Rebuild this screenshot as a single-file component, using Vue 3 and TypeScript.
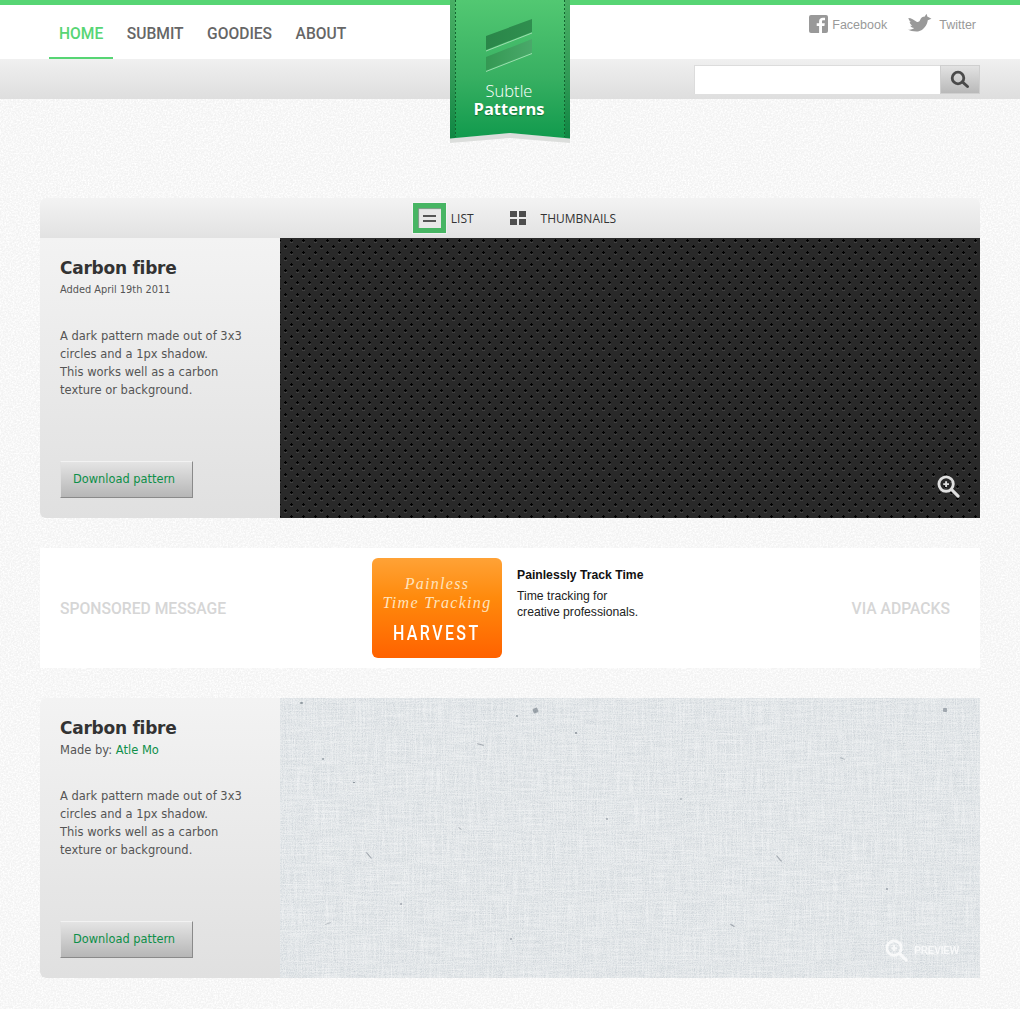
<script setup lang="ts">
interface TPanel {
  id: string;
  kind: "carbon" | "linen";
  meta: string;
  author?: string;
}

interface TSpeck {
  x: number;
  y: number;
  w: number;
  h: number;
  r: number;
  o: number;
}

const navItems = ["Home", "Submit", "Goodies", "About"];

const panels: TPanel[] = [
  { id: "one", kind: "carbon", meta: "Added April 19th 2011" },
  { id: "two", kind: "linen", meta: "Made by: ", author: "Atle Mo" },
];

const specks: TSpeck[] = [
  { x: 20, y: 4, w: 3, h: 2, r: 0, o: 0.6 },
  { x: 253, y: 10, w: 5, h: 5, r: -20, o: 0.55 },
  { x: 295, y: 34, w: 2, h: 2, r: 0, o: 0.7 },
  { x: 236, y: 17, w: 2, h: 2, r: 0, o: 0.6 },
  { x: 197, y: 46, w: 7, h: 1, r: 15, o: 0.5 },
  { x: 42, y: 60, w: 2, h: 2, r: 0, o: 0.6 },
  { x: 73, y: 84, w: 2, h: 1, r: 0, o: 0.7 },
  { x: 663, y: 10, w: 4, h: 4, r: 0, o: 0.5 },
  { x: 85, y: 157, w: 8, h: 1, r: 50, o: 0.5 },
  { x: 495, y: 160, w: 8, h: 1, r: 50, o: 0.5 },
  { x: 606, y: 190, w: 2, h: 2, r: 0, o: 0.5 },
  { x: 450, y: 227, w: 5, h: 1, r: 30, o: 0.5 },
  { x: 45, y: 225, w: 6, h: 1, r: -20, o: 0.4 },
  { x: 326, y: 120, w: 2, h: 2, r: 0, o: 0.5 },
  { x: 120, y: 205, w: 2, h: 2, r: 0, o: 0.5 },
  { x: 560, y: 60, w: 5, h: 1, r: 20, o: 0.35 },
  { x: 400, y: 100, w: 2, h: 2, r: 0, o: 0.4 },
  { x: 230, y: 240, w: 2, h: 2, r: 0, o: 0.5 },
  { x: 178, y: 130, w: 4, h: 1, r: 40, o: 0.4 },
];

function speckStyle(s: TSpeck) {
  return {
    left: `${s.x}px`,
    top: `${s.y}px`,
    width: `${s.w}px`,
    height: `${s.h}px`,
    opacity: s.o,
    transform: `rotate(${s.r}deg)`,
  };
}
</script>

<template>
  <div class="page">
    <header class="site-header">
      <div class="header-top">
        <nav class="main-nav">
          <a
            v-for="(item, i) in navItems"
            :key="item"
            class="nav-link"
            :class="{ active: i === 0 }"
          >{{ item }}</a>
        </nav>
        <div class="social">
          <a class="social-link">
            <svg class="fb-icon" width="19" height="18" viewBox="0 0 19 18">
              <rect width="19" height="18" rx="2" fill="#999" />
              <path
                d="M13 18v-7h2.400l.4-2.800H13V6.600c0-.8.3-1.300 1.400-1.300H16V2.800c-.3 0-1.200-.1-2.200-.1-2.200 0-3.700 1.300-3.700 3.700v1.800H7.700V11h2.400v7z"
                fill="#fff"
              />
            </svg>
            Facebook
          </a>
          <a class="social-link tw">
            <svg class="tw-icon" width="25" height="18" viewBox="0 0 25 18.500">
              <path
                d="M1 4C4 4 7 6 9.500 8C11 8.500 12.500 8 13 6.500C14 3.500 16 2.500 18 2.500C18.500 1.500 19 .5 20 0L20.500 2.500L24.800 5L21 6.500C20.500 11 17 17 11 18C7 18.300 3 17.500 .2 16C3 16.500 5 16 7 14.500C5 14 3.500 13 3 12H5C3.500 11 2.500 9.500 2.300 8L4 8.500C2.500 7.500 1.500 6 1 4Z"
                fill="#999"
              />
            </svg>
            Twitter
          </a>
        </div>
      </div>
      <div class="header-band">
        <form class="search" @submit.prevent>
          <input class="search-input" type="text" />
          <button class="search-btn" type="button" aria-label="Search">
            <svg width="20" height="20" viewBox="0 0 20 20">
              <circle cx="8" cy="8" r="5.800" fill="none" stroke="#4a4a4a" stroke-width="2.800" />
              <path d="M12.500 12l5 4.500" stroke="#4a4a4a" stroke-width="3" stroke-linecap="round" />
            </svg>
          </button>
        </form>
      </div>
    </header>

    <a class="ribbon">
      <svg class="ribbon-shape" width="120" height="144" viewBox="0 0 120 144">
        <defs>
          <linearGradient id="ribbonFill" x1="0" y1="0" x2="0" y2="1">
            <stop offset="0" stop-color="#52c872" />
            <stop offset="0.55" stop-color="#38b062" />
            <stop offset="1" stop-color="#119a4d" />
          </linearGradient>
          <linearGradient id="stripeFill" x1="0" y1="0" x2="1" y2="0">
            <stop offset="0" stop-color="#2a8649" />
            <stop offset="1" stop-color="#2f8f4f" />
          </linearGradient>
          <linearGradient id="stripeFillTwo" x1="0" y1="0" x2="1" y2="0">
            <stop offset="0" stop-color="#349853" />
            <stop offset="1" stop-color="#4aa96a" />
          </linearGradient>
        </defs>
        <path d="M0 138L60 133L120 138V143L60 138L0 143Z" fill="#dcdedc" />
        <path d="M0 0H120V138.500L60 133L0 138.500Z" fill="url(#ribbonFill)" />
        <path d="M0 0H5V138L0 138.500Z" fill="#000" opacity="0.12" />
        <path d="M115 0H120V138.500L115 138Z" fill="#000" opacity="0.12" />
        <path d="M5.500 0V137M114.500 0V137" stroke="#14642f" stroke-width="1" stroke-dasharray="2 2" />
        <path d="M36 36L82 19V32L36 50Z" fill="url(#stripeFill)" />
        <path d="M36 51L82 33" stroke="#9ddcae" stroke-width="1" />
        <path d="M36 57L82 39V52.500L36 70.500Z" fill="url(#stripeFillTwo)" />
        <path d="M36 71.500L82 53.500" stroke="#9ddcae" stroke-width="1" />
      </svg>
      <span class="ribbon-text">
        <span class="ribbon-light">Subtle</span>
        <span class="ribbon-bold">Patterns</span>
      </span>
    </a>

    <main class="content">
      <div class="view-switch">
        <a class="view-option">
          <span class="list-icon"><i></i><i></i></span>
          List
        </a>
        <a class="view-option thumbs">
          <span class="thumb-icon"><i></i><i></i><i></i><i></i></span>
          Thumbnails
        </a>
      </div>

      <template v-for="(panel, index) in panels" :key="panel.id">
        <section class="pattern" :class="panel.kind">
          <div class="pattern-info">
            <h2 class="pattern-title">Carbon fibre</h2>
            <p class="pattern-meta" :class="{ large: panel.author }">
              {{ panel.meta }}<a v-if="panel.author" class="author">{{ panel.author }}</a>
            </p>
            <p class="pattern-desc">
              A dark pattern made out of 3x3<br />
              circles and a 1px shadow.<br />
              This works well as a carbon<br />
              texture or background.
            </p>
            <a class="download">Download pattern</a>
          </div>
          <div class="pattern-preview">
            <template v-if="panel.kind === 'linen'">
              <span
                v-for="(s, i) in specks"
                :key="i"
                class="speck"
                :style="speckStyle(s)"
              ></span>
            </template>
            <div class="zoom" :class="{ faded: panel.kind === 'linen' }">
              <svg width="23" height="23" viewBox="0 0 24 24">
                <circle cx="9.500" cy="9.500" r="7.500" fill="none" stroke="#fff" stroke-width="3" />
                <path d="M15 15l7 7" stroke="#fff" stroke-width="3.200" stroke-linecap="round" />
                <path d="M9.500 6.500v6M6.500 9.500h6" stroke="#fff" stroke-width="2" />
              </svg>
              <span v-if="panel.kind === 'linen'" class="zoom-label">Preview</span>
            </div>
          </div>
        </section>

        <aside v-if="index === 0" class="sponsor">
          <span class="sponsor-label">Sponsored message</span>
          <div class="harvest">
            <span class="harvest-line">Painless</span>
            <span class="harvest-line">Time Tracking</span>
            <span class="harvest-name">HARVEST</span>
          </div>
          <div class="sponsor-copy">
            <strong>Painlessly Track Time</strong>
            <span>Time tracking for<br />creative professionals.</span>
          </div>
          <span class="sponsor-label">Via Adpacks</span>
        </aside>
      </template>
    </main>
  </div>
</template>

<style>
html,
body {
  margin: 0;
  background-color: #f3f3f3;
  background-image: url("data:image/svg+xml,%3Csvg xmlns='http://www.w3.org/2000/svg' width='300' height='300'%3E%3Cfilter id='n'%3E%3CfeTurbulence type='fractalNoise' baseFrequency='0.6' numOctaves='3' stitchTiles='stitch'/%3E%3CfeColorMatrix values='0 0 0 0 1 0 0 0 0 1 0 0 0 0 1 2.4 0 0 0 -0.85'/%3E%3C/filter%3E%3Crect width='300' height='300' filter='url(%23n)'/%3E%3C/svg%3E");
}
</style>

<style scoped>
.page {
  position: relative;
  width: 1020px;
  height: 1009px;
  overflow: hidden;
  font-family: "DejaVu Sans", sans-serif;
}

.site-header {
  border-top: 5px solid #57d574;
}

.header-top {
  display: flex;
  justify-content: space-between;
  height: 54px;
  background: #fff;
}

.main-nav {
  display: flex;
  margin-left: 49px;
  gap: 3.5px;
}

.nav-link {
  box-sizing: border-box;
  height: 54px;
  padding: 19px 10px 0;
  font-family: Roboto, sans-serif;
  font-size: 15.6px;
  font-weight: 500;
  line-height: 20px;
  text-transform: uppercase;
  color: #666;
}

.nav-link.active {
  color: #57d574;
  border-bottom: 2px solid #57d574;
}

.social {
  display: flex;
  gap: 20px;
  padding: 9px 44px 0 0;
  font-family: "Liberation Sans", Arial, sans-serif;
  font-size: 12.5px;
  color: #999;
}

.social-link {
  display: flex;
  align-items: flex-start;
  line-height: 22px;
}

.fb-icon {
  margin: 1px 4px 0 1px;
}

.tw-icon {
  margin: 0 7px 0 0;
}

.header-band {
  display: flex;
  justify-content: flex-end;
  box-sizing: border-box;
  height: 40px;
  padding: 6px 40px 0 0;
  background: linear-gradient(#f0f0f0, #dedede);
}

.search {
  display: flex;
  height: 29px;
}

.search-input {
  box-sizing: border-box;
  width: 246px;
  height: 29px;
  margin: 0;
  padding: 0;
  border: 0;
  border-top: 1px solid #dcdcdc;
  border-left: 1px solid #dcdcdc;
  background: #fff;
  outline: none;
}

.search-btn {
  display: flex;
  align-items: center;
  justify-content: center;
  box-sizing: border-box;
  width: 40px;
  height: 29px;
  padding: 0;
  border: 1px solid #cfcfcf;
  background: linear-gradient(#e2e2e2, #b9b9b9);
}

.ribbon {
  position: absolute;
  top: 0;
  left: 450px;
  width: 120px;
  height: 144px;
}

.ribbon-shape {
  display: block;
}

.ribbon-text {
  position: absolute;
  top: 81px;
  left: -1px;
  width: 100%;
  text-align: center;
  font-family: "Open Sans", sans-serif;
  color: #fff;
}

.ribbon-light {
  display: block;
  font-size: 16.5px;
  font-weight: 300;
  line-height: 19px;
}

.ribbon-bold {
  display: block;
  font-size: 16.5px;
  font-weight: 700;
  line-height: 17px;
  text-shadow: 0 1px 1px rgba(0, 60, 20, 0.5);
}

.content {
  margin: 99px 40px 0;
}

.view-switch {
  display: flex;
  justify-content: center;
  align-items: center;
  gap: 36px;
  height: 40px;
  padding-left: 9px;
  border-radius: 6px 6px 0 0;
  background: linear-gradient(#f3f3f3, #e2e2e2);
  font-family: "Open Sans", sans-serif;
  font-size: 12px;
  text-transform: uppercase;
  color: #333;
}

.view-option {
  display: flex;
  align-items: center;
  gap: 5px;
}

.view-option.thumbs {
  gap: 15px;
}

.list-icon {
  display: flex;
  flex-direction: column;
  align-items: center;
  justify-content: center;
  gap: 3px;
  box-sizing: border-box;
  width: 33px;
  height: 30px;
  border: 5px solid #47b563;
  background: #e8e8e8;
  box-shadow: 0 0 0 1px rgba(255, 255, 255, 0.4), inset 1px 1px 1px rgba(0, 70, 20, 0.5);
}

.list-icon i {
  display: block;
  width: 13px;
  height: 2px;
  background: #555;
}

.thumb-icon {
  display: grid;
  grid-template-columns: 7px 7px;
  gap: 2px;
}

.thumb-icon i {
  display: block;
  height: 6px;
  background: #4d4d4d;
}

.pattern {
  display: flex;
  height: 280px;
}

.pattern.linen {
  overflow: hidden;
  border-radius: 6px 0 0 6px;
}

.pattern-info {
  position: relative;
  box-sizing: border-box;
  width: 240px;
  padding: 19px 20px 0;
  border-radius: 0 0 0 6px;
  background: linear-gradient(#f3f3f3, #e0e0e0);
}

.pattern-title {
  margin: 0;
  font-size: 17px;
  font-weight: 600;
  line-height: 23px;
  letter-spacing: -0.25px;
  color: #333;
}

.pattern-meta {
  margin: 2px 0 0;
  font-size: 9.8px;
  line-height: 16px;
  color: #555;
}

.pattern-meta.large {
  font-size: 11.5px;
}

.author {
  color: #0f8f4a;
}

.pattern-desc {
  margin: 29px 0 0;
  font-size: 11.5px;
  line-height: 18px;
  color: #555;
}

.download {
  position: absolute;
  left: 20px;
  bottom: 20px;
  box-sizing: border-box;
  width: 133px;
  height: 37px;
  padding-left: 12px;
  border: 1px solid;
  border-color: #f2f2f2 #8a8a8a #8a8a8a #e0e0e0;
  background: linear-gradient(#e4e4e4, #b6b6b6);
  font-size: 11.4px;
  line-height: 35px;
  color: #0c8f48;
}

.pattern-preview {
  position: relative;
  flex: 1;
  overflow: hidden;
}

.carbon .pattern-preview {
  background-color: #292929;
  background-image: url("data:image/svg+xml,%3Csvg xmlns='http://www.w3.org/2000/svg' width='12' height='12'%3E%3Cg fill='%23000'%3E%3Crect x='11' y='1' width='1' height='3'/%3E%3Crect x='10' y='2' width='2' height='1'/%3E%3Crect x='0' y='2' width='1' height='1'/%3E%3Crect x='5' y='7' width='1' height='3'/%3E%3Crect x='4' y='8' width='3' height='1'/%3E%3C/g%3E%3Cg fill='%23404040'%3E%3Crect x='10' y='4' width='2' height='1'/%3E%3Crect x='0' y='4' width='1' height='1'/%3E%3Crect x='4' y='10' width='3' height='1'/%3E%3C/g%3E%3C/svg%3E");
}

.linen .pattern-preview {
  background-color: #e3e7e9;
  background-image: url("data:image/svg+xml,%3Csvg xmlns='http://www.w3.org/2000/svg' width='700' height='280'%3E%3Cfilter id='n'%3E%3CfeTurbulence type='fractalNoise' baseFrequency='0.9' numOctaves='2'/%3E%3CfeColorMatrix values='0 0 0 0 0.5 0 0 0 0 0.55 0 0 0 0 0.6 1.3 0 0 0 -0.45'/%3E%3C/filter%3E%3Cfilter id='w'%3E%3CfeTurbulence type='fractalNoise' baseFrequency='0.03 0.8' numOctaves='2'/%3E%3CfeColorMatrix values='0 0 0 0 1 0 0 0 0 1 0 0 0 0 1 0.8 0 0 0 -0.3'/%3E%3C/filter%3E%3Cfilter id='v'%3E%3CfeTurbulence type='fractalNoise' baseFrequency='0.8 0.03' numOctaves='2'/%3E%3CfeColorMatrix values='0 0 0 0 1 0 0 0 0 1 0 0 0 0 1 0.8 0 0 0 -0.3'/%3E%3C/filter%3E%3Crect width='700' height='280' filter='url(%23n)'/%3E%3Crect width='700' height='280' filter='url(%23w)'/%3E%3Crect width='700' height='280' filter='url(%23v)'/%3E%3C/svg%3E");
}

.speck {
  position: absolute;
  border-radius: 1px;
  background: #5f6a75;
}

.zoom {
  position: absolute;
  right: 20px;
  bottom: 20px;
  display: flex;
  align-items: center;
  opacity: 0.85;
}

.zoom.faded {
  right: 21px;
  bottom: 16px;
  opacity: 0.75;
}

.zoom-label {
  margin-left: 6px;
  font-family: "Liberation Sans", Arial, sans-serif;
  font-size: 10px;
  font-weight: 700;
  letter-spacing: -0.2px;
  text-transform: uppercase;
  color: #fff;
}

.sponsor {
  display: grid;
  grid-template-columns: 312px 130px 1fr auto;
  align-items: center;
  box-sizing: border-box;
  height: 120px;
  margin: 30px 0;
  padding: 0 30px 0 20px;
  background: #fff;
}

.sponsor-label {
  font-family: Roboto, sans-serif;
  font-size: 15.7px;
  font-weight: 500;
  text-transform: uppercase;
  color: #d6d6d6;
}

.harvest {
  display: flex;
  flex-direction: column;
  align-items: center;
  box-sizing: border-box;
  height: 100px;
  padding-top: 16px;
  border-radius: 6px;
  background: linear-gradient(#ffa236, #ff8a0c 40%, #ff6200);
  color: #ffe3bd;
}

.harvest-line {
  font-family: "Liberation Serif", serif;
  font-size: 16px;
  font-style: italic;
  line-height: 19px;
  letter-spacing: 1.3px;
}

.harvest-name {
  margin-top: 9px;
  font-family: Roboto, sans-serif;
  font-size: 20px;
  font-weight: 500;
  letter-spacing: 3px;
  color: #fff;
  transform: scaleX(0.8);
}

.sponsor-copy {
  display: flex;
  flex-direction: column;
  gap: 5px;
  align-self: start;
  margin: 19px 0 0 15px;
  font-family: "Liberation Sans", Arial, sans-serif;
  font-size: 12.2px;
  line-height: 16px;
  color: #222;
}

.sponsor-copy strong {
  color: #111;
}
</style>
